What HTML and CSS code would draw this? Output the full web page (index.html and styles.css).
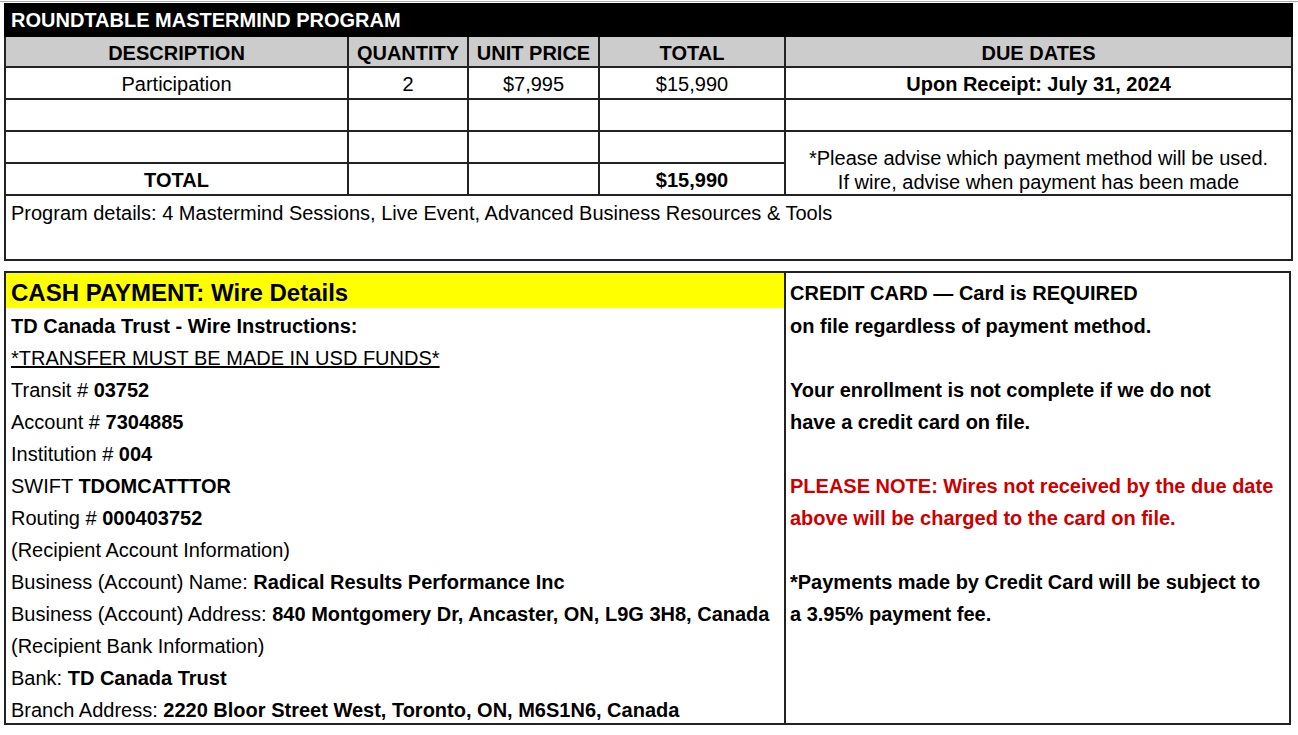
FILE: index.html
```html
<!DOCTYPE html>
<html>
<head>
<meta charset="utf-8">
<link rel="stylesheet" href="styles.css">
</head>
<body>
<div class="page">
  <table class="invoice">
    <colgroup>
      <col class="c-desc"><col class="c-qty"><col class="c-unit"><col class="c-total"><col class="c-due">
    </colgroup>
    <tr class="title-row"><td colspan="5">ROUNDTABLE MASTERMIND PROGRAM</td></tr>
    <tr class="head-row">
      <th>DESCRIPTION</th><th>QUANTITY</th><th>UNIT PRICE</th><th>TOTAL</th><th>DUE DATES</th>
    </tr>
    <tr class="row">
      <td>Participation</td><td>2</td><td>$7,995</td><td>$15,990</td><td class="bold">Upon Receipt: July 31, 2024</td>
    </tr>
    <tr class="row"><td></td><td></td><td></td><td></td><td></td></tr>
    <tr class="row"><td></td><td></td><td></td><td></td>
      <td rowspan="2" class="advise">*Please advise which payment method will be used.<br>If wire, advise when payment has been made</td></tr>
    <tr class="row"><td class="bold">TOTAL</td><td></td><td></td><td class="bold">$15,990</td></tr>
    <tr class="details-row"><td colspan="5">Program details: 4 Mastermind Sessions, Live Event, Advanced Business Resources &amp; Tools</td></tr>
  </table>

  <div class="payment">
    <div class="wire">
      <div class="wire-head">CASH PAYMENT: Wire Details</div>
      <div class="line"><b>TD Canada Trust - Wire Instructions:</b></div>
      <div class="line"><u>*TRANSFER MUST BE MADE IN USD FUNDS*</u></div>
      <div class="line">Transit # <b>03752</b></div>
      <div class="line">Account # <b>7304885</b></div>
      <div class="line">Institution # <b>004</b></div>
      <div class="line">SWIFT <b>TDOMCATTTOR</b></div>
      <div class="line">Routing # <b>000403752</b></div>
      <div class="line">(Recipient Account Information)</div>
      <div class="line">Business (Account) Name: <b>Radical Results Performance Inc</b></div>
      <div class="line">Business (Account) Address: <b>840 Montgomery Dr, Ancaster, ON, L9G 3H8, Canada</b></div>
      <div class="line">(Recipient Bank Information)</div>
      <div class="line">Bank: <b>TD Canada Trust</b></div>
      <div class="line">Branch Address: <b>2220 Bloor Street West, Toronto, ON, M6S1N6, Canada</b></div>
    </div>
    <div class="card">
      <div class="card-head">CREDIT CARD — Card is REQUIRED</div>
      <div class="line">on file regardless of payment method.</div>
      <div class="line"></div>
      <div class="line">Your enrollment is not complete if we do not</div>
      <div class="line">have a credit card on file.</div>
      <div class="line"></div>
      <div class="line red">PLEASE NOTE: Wires not received by the due date</div>
      <div class="line red">above will be charged to the card on file.</div>
      <div class="line"></div>
      <div class="line">*Payments made by Credit Card will be subject to</div>
      <div class="line">a 3.95% payment fee.</div>
    </div>
  </div>
</div>
</body>
</html>
```

FILE: styles.css
```css
html, body {
  margin: 0;
  padding: 0;
  background: #fff;
}
body {
  font-family: "Liberation Sans", Arial, sans-serif;
  font-size: 20px;
  color: #000;
}
.page {
  border-top: 1px solid #aaa;
  margin-top: 1px;
  padding: 1px 7px 0 4px;
}
.invoice {
  width: 1287px;
  border-collapse: collapse;
  table-layout: fixed;
}
.c-desc { width: 343px; }
.c-qty { width: 120px; }
.c-unit { width: 131px; }
.c-total { width: 186px; }
.c-due { width: 507px; }

.invoice td, .invoice th {
  border: 2px solid #222;
  padding: 0 4px;
  text-align: center;
  white-space: nowrap;
  line-height: 22px;
}
.title-row td {
  background: #000;
  color: #fff;
  font-weight: bold;
  text-align: left;
  height: 30px;
  padding: 0 5px;
  border-color: #000;
}
.head-row th {
  background: #cccccc;
  font-weight: bold;
  height: 27px;
  padding-top: 2px;
}
.row td {
  height: 28px;
  padding-top: 2px;
}
.bold { font-weight: bold; }
.advise {
  line-height: 24px !important;
  vertical-align: bottom;
  padding-bottom: 0 !important;
}
.details-row td {
  text-align: left;
  vertical-align: top;
  height: 57px;
  padding: 6px 5px 0 5px;
}

.payment {
  margin-top: 10px;
  width: 1283px;
  border: 2px solid #222;
  display: flex;
  height: 450px;
}
.wire {
  width: 778px;
  border-right: 2px solid #222;
  flex: none;
}
.card {
  flex: 1;
  padding-left: 4px;
  font-weight: bold;
}
.wire-head {
  background: #ffff00;
  font-weight: bold;
  font-size: 24px;
  height: 35px;
  line-height: 40px;
  padding-left: 5px;
  margin-bottom: 2px;
  white-space: nowrap;
  overflow: hidden;
}
.card-head {
  height: 37px;
  line-height: 40px;
  white-space: nowrap;
}
.line {
  height: 32px;
  line-height: 32px;
  white-space: nowrap;
}
.wire .line {
  padding-left: 5px;
}
.red {
  color: #cc0000;
}
```
